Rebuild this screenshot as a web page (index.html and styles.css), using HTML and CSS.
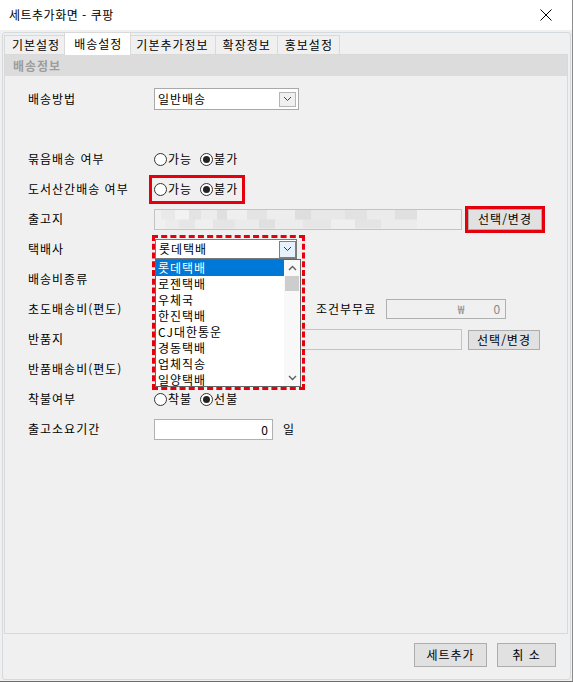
FILE: index.html
```html
<!DOCTYPE html>
<html lang="ko">
<head>
	<meta charset="utf-8">
	<title>세트추가화면 - 쿠팡</title>
	<link rel="stylesheet" href="styles.css">
</head>
<body>
<div class="window">
	<div class="titlebar">
		<span class="title">세트추가화면 - 쿠팡</span>
		<svg class="close" width="12" height="12" viewBox="0 0 12 12"><path d="M0.5 0.5 L11.5 11.5 M11.5 0.5 L0.5 11.5" stroke="#000" stroke-width="1" fill="none"/></svg>
	</div>

	<div class="frame">
		<div class="tabs">
			<div class="tab">기본설정</div>
			<div class="tab active">배송설정</div>
			<div class="tab">기본추가정보</div>
			<div class="tab">확장정보</div>
			<div class="tab">홍보설정</div>
		</div>

		<div class="page">
			<div class="group-head">배송정보</div>
			<div class="form">
				<div class="label">배송방법</div>
				<div class="field">
					<div class="select select-method">
						<span class="value">일반배송</span>
						<span class="drop"><svg width="9" height="6" viewBox="0 0 9 6"><path d="M1 1 L4.5 4.5 L8 1" stroke="#444" fill="none"/></svg></span>
					</div>
				</div>

				<div class="label"></div>
				<div class="field"></div>

				<div class="label">묶음배송 여부</div>
				<div class="field">
					<div class="radios">
						<span class="radio"><i class="dot"></i>가능</span>
						<span class="radio on"><i class="dot"></i>불가</span>
					</div>
				</div>

				<div class="label">도서산간배송 여부</div>
				<div class="field">
					<div class="radios hl">
						<span class="radio"><i class="dot"></i>가능</span>
						<span class="radio on"><i class="dot"></i>불가</span>
					</div>
				</div>

				<div class="label">출고지</div>
				<div class="field">
					<div class="text text-addr blur"></div>
					<button class="btn btn-pick hl-btn">선택/변경</button>
				</div>

				<div class="label">택배사</div>
				<div class="field">
					<div class="combo">
						<div class="select select-carrier">
							<span class="value">롯데택배</span>
							<span class="drop hover"><svg width="9" height="6" viewBox="0 0 9 6"><path d="M1 1 L4.5 4.5 L8 1" stroke="#333" fill="none"/></svg></span>
						</div>
						<div class="list">
							<div class="items">
								<div class="item sel">롯데택배</div>
								<div class="item">로젠택배</div>
								<div class="item">우체국</div>
								<div class="item">한진택배</div>
								<div class="item">CJ대한통운</div>
								<div class="item">경동택배</div>
								<div class="item">업체직송</div>
								<div class="item">일양택배</div>
							</div>
							<div class="scroll">
								<span class="arrow"><svg width="9" height="6" viewBox="0 0 9 6"><path d="M1 5 L4.5 1.5 L8 5" stroke="#606060" stroke-width="1.4" fill="none"/></svg></span>
								<span class="thumb"></span>
								<span class="track"></span>
								<span class="arrow"><svg width="9" height="6" viewBox="0 0 9 6"><path d="M1 1 L4.5 4.5 L8 1" stroke="#606060" stroke-width="1.4" fill="none"/></svg></span>
							</div>
						</div>
						<div class="mark-dashed"></div>
					</div>
				</div>

				<div class="label">배송비종류</div>
				<div class="field"></div>

				<div class="label">초도배송비(편도)</div>
				<div class="field">
					<div class="spacer"></div>
					<span class="sub-label">조건부무료</span>
					<div class="text text-money"><span>₩</span><span>0</span></div>
				</div>

				<div class="label">반품지</div>
				<div class="field">
					<div class="text text-addr"></div>
					<button class="btn btn-pick btn-pick2">선택/변경</button>
				</div>

				<div class="label">반품배송비(편도)</div>
				<div class="field"></div>

				<div class="label">착불여부</div>
				<div class="field">
					<div class="radios">
						<span class="radio"><i class="dot"></i>착불</span>
						<span class="radio on"><i class="dot"></i>선불</span>
					</div>
				</div>

				<div class="label">출고소요기간</div>
				<div class="field">
					<div class="text text-days">0</div>
					<span class="unit">일</span>
				</div>
			</div>
		</div>

		<div class="footer">
			<button class="btn btn-add">세트추가</button>
			<button class="btn btn-cancel">취 소</button>
		</div>
	</div>
</div>
</body>
</html>
```

FILE: styles.css
```css
*{
	box-sizing: border-box;
}

body{
	margin: 0;
	background: #f0f0f0;
	font-family: "Noto Sans CJK KR", "Noto Sans", sans-serif;
	font-size: 12px;
	letter-spacing: 1px;
	color: #000;
}

.window{
	width: 573px;
	height: 682px;
	display: flex;
	flex-direction: column;
	background: #f0f0f0;
	border-right: 1px solid #8c8c8c;
	border-bottom: 1px solid #6e6e6e;
	overflow: hidden;
}

/* title bar */
.titlebar{
	flex: none;
	height: 30px;
	display: flex;
	align-items: center;
	justify-content: space-between;
	padding: 0 20px 0 9px;
	background: #fff;
}
	.title{
		line-height: 14px;
		letter-spacing: 0.5px;
	}

/* outer frame with tabs */
.frame{
	flex: 1;
	display: flex;
	flex-direction: column;
	margin: 2px 1px 1px 2px;
	border: 1px solid #d5dadf;
	border-radius: 3px;
}

.tabs{
	display: flex;
	align-items: flex-end;
	height: 22px;
	padding-left: 1px;
	margin-bottom: -1px;
}
	.tab{
		height: 20px;
		padding: 0 6px 0 7px;
		line-height: 18px;
		border: 1px solid #d9d9d9;
		border-bottom: none;
		margin-right: -1px;
		background: #f0f0f0;
		white-space: nowrap;
	}
	.tab.active{
		height: 23px;
		padding: 0 8px 0 9px;
		margin: 0 -3px 0 -2px;
		line-height: 21px;
		background: #fff;
		position: relative;
		z-index: 1;
	}

.page{
	height: 580px;
	margin: 0 2px 0 1px;
	border: 1px solid #d9d9d9;
	display: flex;
	flex-direction: column;
}

.group-head{
	height: 21px;
	padding-left: 8px;
	line-height: 21px;
	background: #dcdcdc;
	color: #9d9d9d;
	font-weight: bold;
}

/* form rows */
.form{
	display: grid;
	grid-template-columns: 126px 1fr;
	grid-auto-rows: 30px;
	align-items: center;
	padding: 8px 0 0 23px;
}
	.label{
		line-height: 14px;
		white-space: nowrap;
	}
	.field{
		display: flex;
		align-items: center;
		height: 30px;
	}

.select{
	display: flex;
	align-items: center;
	justify-content: space-between;
	background: #fff;
	border: 1px solid #a9a9a9;
}
	.select .value{
		line-height: 14px;
		padding-left: 3px;
	}
	.select-method{
		width: 145px;
		height: 22px;
		padding-right: 2px;
	}
	.drop{
		width: 17px;
		height: 15px;
		display: flex;
		align-items: center;
		justify-content: center;
		border: 1px solid #b5b5b5;
		background: #f0f0f0;
	}
	.drop.hover{
		height: 17px;
		border-color: #3c8fdc;
		background: #e5f1fb;
	}

.radios{
	display: flex;
	align-items: center;
	gap: 8px;
}
	.radio{
		display: flex;
		align-items: center;
		gap: 1px;
		line-height: 14px;
	}
	.dot{
		width: 13px;
		height: 13px;
		display: flex;
		align-items: center;
		justify-content: center;
		border: 1px solid #333;
		border-radius: 50%;
		background: #fff;
	}
	.radio.on .dot::after{
		content: "";
		width: 7px;
		height: 7px;
		border-radius: 50%;
		background: #222;
	}

.hl{
	height: 23px;
	margin-left: -2px;
	padding: 0 4px 0 2px;
	outline: 3px solid #e5000e;
}

.text{
	height: 21px;
	border: 1px solid #b0b0b0;
	background: #fff;
}
	.text-addr{
		width: 308px;
		background: #f0f0f0;
		border-color: #c4c4c4;
	}
	.blur{
		background:
			linear-gradient(90deg, #f0f0f0 0 6px, #e9e9e9 6px 20px, #f2f2f2 20px 34px, #e3e3e3 34px 46px, #ececec 46px 62px, #dfdfdf 62px 72px, #efefef 72px 92px, #e4e4e4 92px 112px, #ededed 112px 140px, #dedede 140px 156px, #e8e8e8 156px 190px, #e2e2e2 190px 212px, #ebebeb 212px 240px, #e0e0e0 240px 262px, #f0f0f0 262px) top / 100% 50% no-repeat,
			linear-gradient(90deg, #f0f0f0 0 10px, #ececec 10px 24px, #e6e6e6 24px 40px, #efefef 40px 58px, #e5e5e5 58px 80px, #ebebeb 80px 104px, #e0e0e0 104px 120px, #ececec 120px 148px, #e6e6e6 148px 176px, #efefef 176px 200px, #e4e4e4 200px 226px, #ececec 226px 262px, #f0f0f0 262px) bottom / 100% 50% no-repeat;
	}
	.text-money{
		width: 120px;
		height: 20px;
		display: flex;
		align-items: center;
		justify-content: flex-end;
		gap: 28px;
		padding-right: 4px;
		background: #f0f0f0;
		color: #8a8a8a;
		line-height: 14px;
	}
	.text-days{
		width: 119px;
		height: 21px;
		padding-right: 3px;
		text-align: right;
		line-height: 19px;
	}

.unit{
	margin-left: 10px;
	line-height: 14px;
}

.spacer{
	width: 148px;
}
.sub-label{
	margin: 0 10px 0 14px;
	line-height: 14px;
}

.btn{
	height: 21px;
	padding: 0;
	border: 1px solid #adadad;
	background: #e1e1e1;
	font-family: inherit;
	font-size: 12px;
	letter-spacing: 1px;
	color: #000;
	line-height: 14px;
}
	.btn-pick{
		width: 74px;
		margin-left: 6px;
	}
	.btn-pick2{
		width: 72px;
		height: 20px;
		margin-top: 1px;
	}
	.hl-btn{
		outline: 3px solid #e5000e;
	}
	.btn-add{
		width: 73px;
		height: 24px;
	}
	.btn-cancel{
		width: 59px;
		height: 24px;
	}

/* open combo list */
.combo{
	position: relative;
	width: 142px;
	height: 20px;
	margin-left: 1px;
}
	.select-carrier{
		height: 20px;
		border-color: #7a7a7a;
		padding-right: 0;
	}
	.list{
		position: absolute;
		left: 0;
		top: 20px;
		width: 146px;
		height: 128px;
		display: flex;
		border: 1px solid #646464;
		background: #fff;
		z-index: 2;
	}
	.items{
		flex: 1;
	}
	.item{
		height: 16px;
		padding-left: 2px;
		line-height: 16px;
		white-space: nowrap;
	}
	.item.sel{
		background: #0078d7;
		color: #fff;
	}
	.scroll{
		width: 16px;
		display: flex;
		flex-direction: column;
		background: #f8f8f8;
	}
	.arrow{
		height: 16px;
		display: flex;
		align-items: center;
		justify-content: center;
	}
	.thumb{
		height: 15px;
		margin: 0 1px;
		background: #cdcdcd;
	}
	.track{
		flex: 1;
	}
	.mark-dashed{
		position: absolute;
		left: 0;
		top: -1px;
		width: 147px;
		height: 149px;
		outline: 3px dashed #e5000e;
		z-index: 3;
		pointer-events: none;
	}

.footer{
	display: flex;
	justify-content: flex-end;
	gap: 10px;
	padding: 9px 14px 0 0;
}
```
